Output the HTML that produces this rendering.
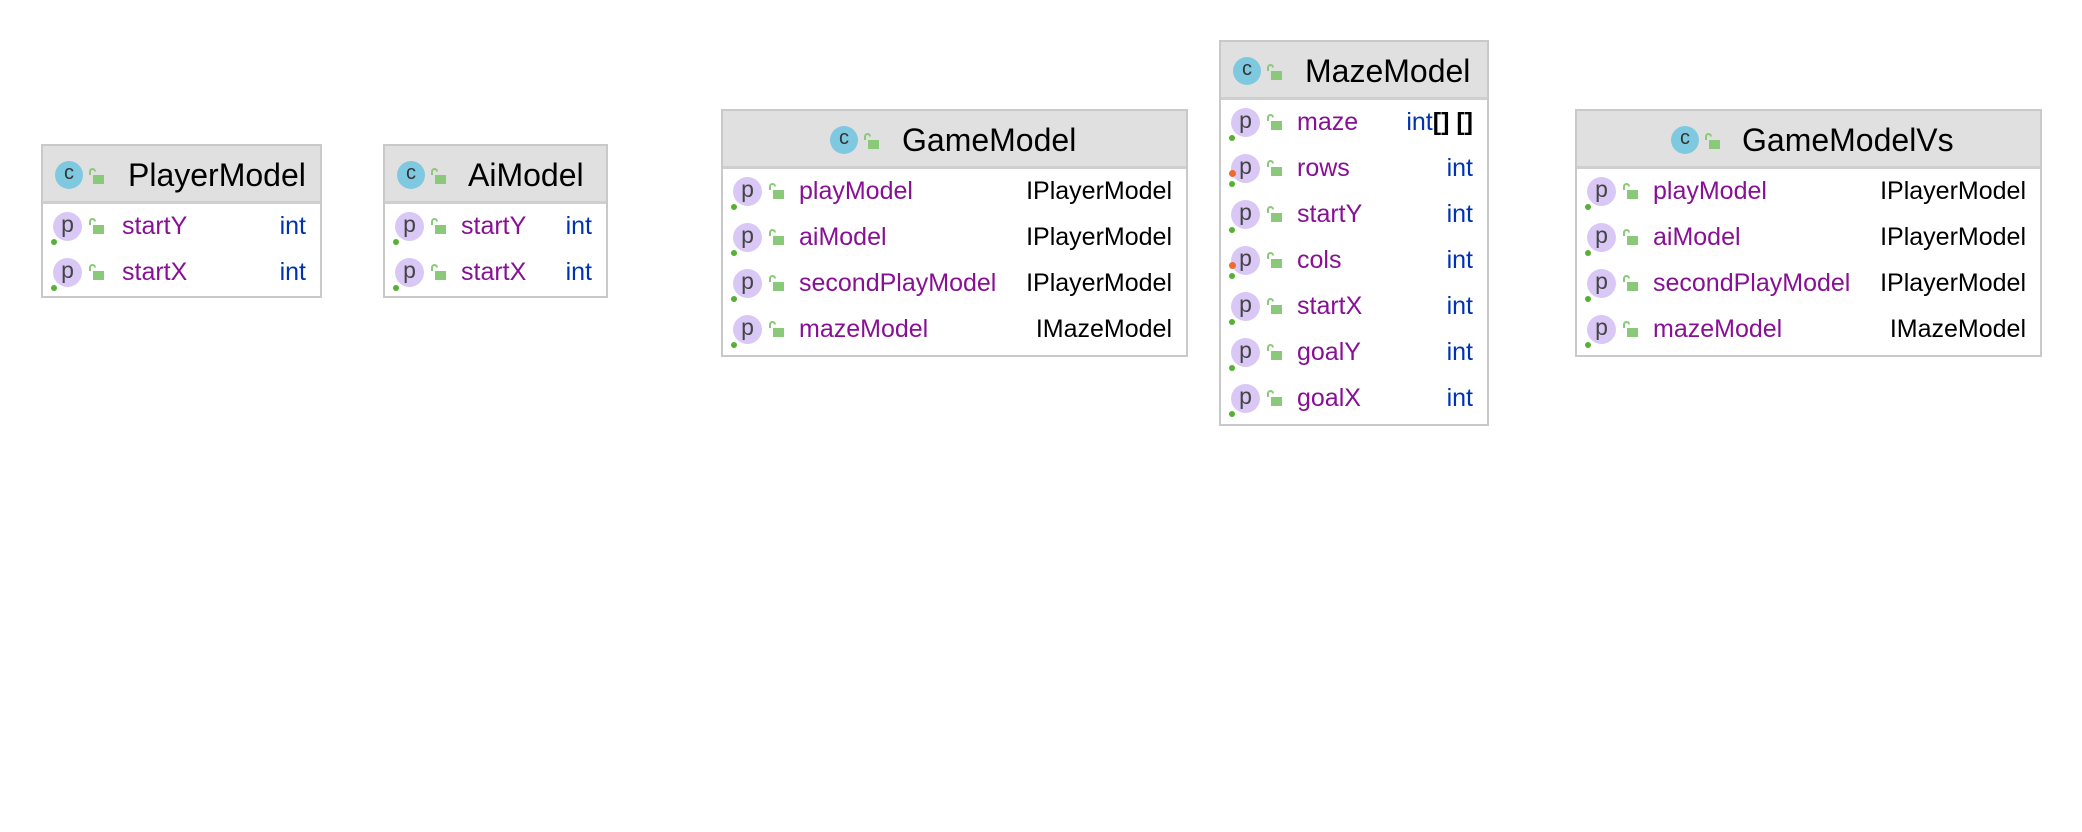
<!DOCTYPE html>
<html><head><meta charset="utf-8"><style>
body{margin:0;width:2082px;height:832px;background:#fff;position:relative;overflow:hidden;font-family:"Liberation Sans","DejaVu Sans",sans-serif}
.box{position:absolute;border:2px solid #c9c9c9;background:#fff;box-sizing:border-box}
.hd{height:58px;background:#e0e0e0;border-bottom:3px solid #cfcfcf;position:relative;box-sizing:border-box}
.hd .t{position:absolute;top:11px;font-size:32px;color:#000;white-space:nowrap}
.ci{position:absolute;top:15px;width:28px;height:28px;border-radius:50%;background:#7ec8e0;color:#333;font-size:20px;line-height:25px;text-align:center}
.lk{position:absolute;width:16px;height:16px}
.row{height:46px;position:relative}
.pi{position:absolute;left:10px;top:8px;width:29px;height:29px;border-radius:50%;background:#d9c8f6;color:#444;font-size:23px;line-height:25px;text-align:center}
.gd{position:absolute;left:8px;top:35px;width:6px;height:6px;border-radius:50%;background:#55b033}
.od{position:absolute;left:8px;top:24px;width:7px;height:7px;border-radius:50%;background:#f06a2a}
.row .lk{left:45px;top:14px}
.nm{position:absolute;left:76px;top:8px;font-size:25px;color:#871094;white-space:nowrap}
.ty{position:absolute;right:14px;top:8px;font-size:25px;white-space:nowrap;color:#000}
.b{color:#0033b3}
</style></head><body>
<svg width="0" height="0" style="position:absolute"><defs>
<symbol id="l" viewBox="0 0 16 16"><path d="M2 7 V3.5 A2.5 2.5 0 0 1 7 3.5" fill="none" stroke="#8bc97a" stroke-width="2"/><rect x="5" y="7" width="11" height="9" fill="#8bc97a"/></symbol>
</defs></svg>

<div class="box" style="left:41px;top:144px;width:281px;height:154px">
 <div class="hd"><div class="ci" style="left:12px">c</div><svg class="lk" style="left:45px;top:22px"><use href="#l"/></svg><div class="t" style="left:85px">PlayerModel</div></div>
 <div class="row"><div class="pi">p</div><div class="gd"></div><svg class="lk"><use href="#l"/></svg><div class="nm" style="left:79px">startY</div><div class="ty b">int</div></div>
 <div class="row"><div class="pi">p</div><div class="gd"></div><svg class="lk"><use href="#l"/></svg><div class="nm" style="left:79px">startX</div><div class="ty b">int</div></div>
</div>

<div class="box" style="left:383px;top:144px;width:225px;height:154px">
 <div class="hd"><div class="ci" style="left:12px">c</div><svg class="lk" style="left:45px;top:22px"><use href="#l"/></svg><div class="t" style="left:83px">AiModel</div></div>
 <div class="row"><div class="pi">p</div><div class="gd"></div><svg class="lk"><use href="#l"/></svg><div class="nm">startY</div><div class="ty b">int</div></div>
 <div class="row"><div class="pi">p</div><div class="gd"></div><svg class="lk"><use href="#l"/></svg><div class="nm">startX</div><div class="ty b">int</div></div>
</div>

<div class="box" style="left:721px;top:109px;width:467px;height:248px">
 <div class="hd"><div class="ci" style="left:107px">c</div><svg class="lk" style="left:140px;top:22px"><use href="#l"/></svg><div class="t" style="left:179px">GameModel</div></div>
 <div class="row"><div class="pi">p</div><div class="gd"></div><svg class="lk"><use href="#l"/></svg><div class="nm">playModel</div><div class="ty">IPlayerModel</div></div>
 <div class="row"><div class="pi">p</div><div class="gd"></div><svg class="lk"><use href="#l"/></svg><div class="nm">aiModel</div><div class="ty">IPlayerModel</div></div>
 <div class="row"><div class="pi">p</div><div class="gd"></div><svg class="lk"><use href="#l"/></svg><div class="nm">secondPlayModel</div><div class="ty">IPlayerModel</div></div>
 <div class="row"><div class="pi">p</div><div class="gd"></div><svg class="lk"><use href="#l"/></svg><div class="nm">mazeModel</div><div class="ty">IMazeModel</div></div>
</div>

<div class="box" style="left:1219px;top:40px;width:270px;height:386px">
 <div class="hd"><div class="ci" style="left:12px">c</div><svg class="lk" style="left:45px;top:22px"><use href="#l"/></svg><div class="t" style="left:84px">MazeModel</div></div>
 <div class="row"><div class="pi">p</div><div class="gd"></div><svg class="lk"><use href="#l"/></svg><div class="nm">maze</div><div class="ty"><span class="b">int</span><b>[] []</b></div></div>
 <div class="row"><div class="pi">p</div><div class="od"></div><div class="gd"></div><svg class="lk"><use href="#l"/></svg><div class="nm">rows</div><div class="ty b">int</div></div>
 <div class="row"><div class="pi">p</div><div class="gd"></div><svg class="lk"><use href="#l"/></svg><div class="nm">startY</div><div class="ty b">int</div></div>
 <div class="row"><div class="pi">p</div><div class="od"></div><div class="gd"></div><svg class="lk"><use href="#l"/></svg><div class="nm">cols</div><div class="ty b">int</div></div>
 <div class="row"><div class="pi">p</div><div class="gd"></div><svg class="lk"><use href="#l"/></svg><div class="nm">startX</div><div class="ty b">int</div></div>
 <div class="row"><div class="pi">p</div><div class="gd"></div><svg class="lk"><use href="#l"/></svg><div class="nm">goalY</div><div class="ty b">int</div></div>
 <div class="row"><div class="pi">p</div><div class="gd"></div><svg class="lk"><use href="#l"/></svg><div class="nm">goalX</div><div class="ty b">int</div></div>
</div>

<div class="box" style="left:1575px;top:109px;width:467px;height:248px">
 <div class="hd"><div class="ci" style="left:94px">c</div><svg class="lk" style="left:127px;top:22px"><use href="#l"/></svg><div class="t" style="left:165px">GameModelVs</div></div>
 <div class="row"><div class="pi">p</div><div class="gd"></div><svg class="lk"><use href="#l"/></svg><div class="nm">playModel</div><div class="ty">IPlayerModel</div></div>
 <div class="row"><div class="pi">p</div><div class="gd"></div><svg class="lk"><use href="#l"/></svg><div class="nm">aiModel</div><div class="ty">IPlayerModel</div></div>
 <div class="row"><div class="pi">p</div><div class="gd"></div><svg class="lk"><use href="#l"/></svg><div class="nm">secondPlayModel</div><div class="ty">IPlayerModel</div></div>
 <div class="row"><div class="pi">p</div><div class="gd"></div><svg class="lk"><use href="#l"/></svg><div class="nm">mazeModel</div><div class="ty">IMazeModel</div></div>
</div>
</body></html>
